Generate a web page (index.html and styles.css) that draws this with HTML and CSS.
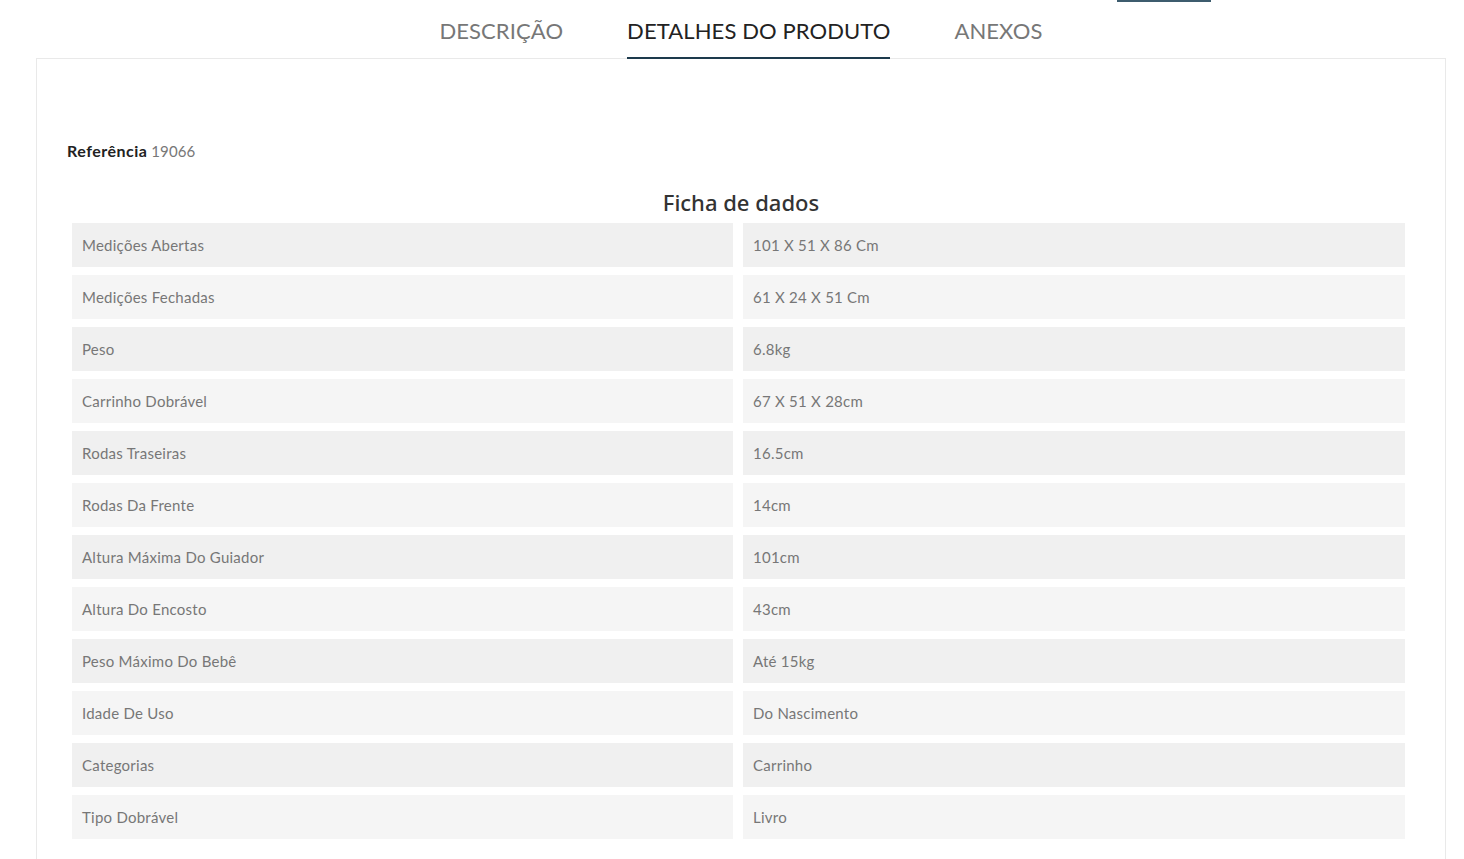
FILE: index.html
```html
<!DOCTYPE html>
<html lang="pt">
<head>
<meta charset="utf-8">
<title>Detalhes do produto</title>
<link rel="stylesheet" href="styles.css">
</head>
<body>
<div class="top-mark"></div>
<div class="wrap">
  <nav class="tabs">
    <a class="tab">DESCRIÇÃO</a>
    <a class="tab active">DETALHES DO PRODUTO</a>
    <a class="tab">ANEXOS</a>
  </nav>
  <section class="panel">
    <p class="ref"><span class="ref-label">Referência</span> <span class="ref-value">19066</span></p>
    <h3 class="sheet-title">Ficha de dados</h3>
    <div class="sheet">
      <div class="cell odd">Medições Abertas</div><div class="cell odd">101 X 51 X 86 Cm</div>
      <div class="cell even">Medições Fechadas</div><div class="cell even">61 X 24 X 51 Cm</div>
      <div class="cell odd">Peso</div><div class="cell odd">6.8kg</div>
      <div class="cell even">Carrinho Dobrável</div><div class="cell even">67 X 51 X 28cm</div>
      <div class="cell odd">Rodas Traseiras</div><div class="cell odd">16.5cm</div>
      <div class="cell even">Rodas Da Frente</div><div class="cell even">14cm</div>
      <div class="cell odd">Altura Máxima Do Guiador</div><div class="cell odd">101cm</div>
      <div class="cell even">Altura Do Encosto</div><div class="cell even">43cm</div>
      <div class="cell odd">Peso Máximo Do Bebê</div><div class="cell odd">Até 15kg</div>
      <div class="cell even">Idade De Uso</div><div class="cell even">Do Nascimento</div>
      <div class="cell odd">Categorias</div><div class="cell odd">Carrinho</div>
      <div class="cell even">Tipo Dobrável</div><div class="cell even">Livro</div>
    </div>
  </section>
</div>
</body>
</html>
```
FILE: styles.css
```css
html, body {
  margin: 0;
  padding: 0;
  background: #fff;
  height: 100%;
  overflow: hidden;
}
body {
  font-family: Lato, "Liberation Sans", sans-serif;
  color: #777;
  position: relative;
}
.top-mark {
  position: absolute;
  left: 1117px;
  top: 0;
  width: 94px;
  height: 2px;
  background: #3d5c6e;
}
.wrap {
  margin: 0 18px 0 36px;
}
.tabs {
  display: flex;
  justify-content: center;
  gap: 64px;
  height: 58px;
  position: relative;
  z-index: 1;
}
.tab {
  font-size: 22px;
  line-height: 24px;
  letter-spacing: 0.1px;
  padding-top: 19px;
  color: #777;
  text-transform: uppercase;
  box-sizing: border-box;
  height: 59px;
  border-bottom: 2px solid transparent;
}
.tab.active {
  color: #222;
  border-bottom-color: #1d3a4c;
}
.panel {
  border: 1px solid #e9e9e9;
  border-bottom: none;
  padding: 81px 30px 40px 30px;
  min-height: 900px;
}
.ref {
  margin: 0;
  font-size: 15px;
  line-height: 22px;
}
.ref-label {
  font-weight: 700;
  font-size: 16px;
  letter-spacing: 0.5px;
  color: #222;
}
.ref-value {
  color: #777;
  letter-spacing: 0.1px;
}
.sheet-title {
  margin: 26px 0 0 0;
  text-align: center;
  font-family: "Noto Sans", sans-serif;
  font-weight: 500;
  font-size: 22px;
  line-height: 28px;
  color: #333;
}
.sheet {
  display: grid;
  grid-template-columns: 661px 1fr;
  gap: 8px 10px;
  margin: 7px 10px 0 5px;
}
.cell {
  height: 44px;
  display: flex;
  align-items: center;
  padding: 0 10px;
  font-size: 15px;
  letter-spacing: 0.25px;
  color: #777;
}
.cell.odd { background: #f0f0f0; }
.cell.even { background: #f5f5f5; }
```
